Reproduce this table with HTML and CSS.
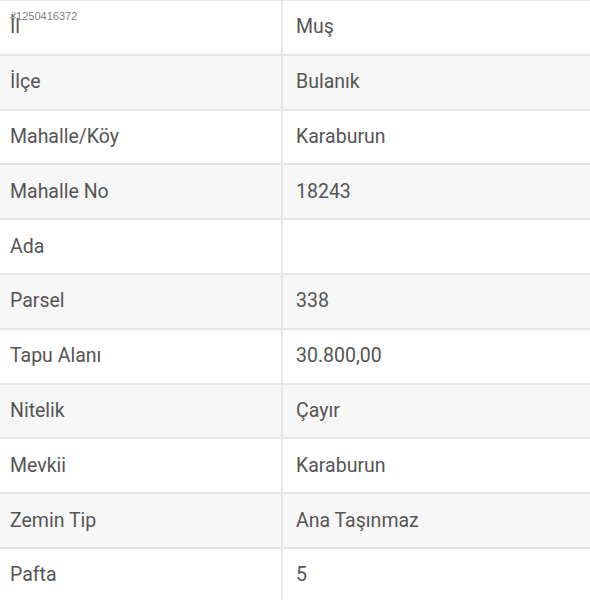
FILE: index.html
```html
<!DOCTYPE html>
<html lang="tr">
<head>
<meta charset="utf-8">
<link rel="stylesheet" href="styles.css">
</head>
<body>
<div class="wrap">
  <span class="listing-id">#1250416372</span>
  <table class="info">
    <tr><td class="k">İl</td><td class="v">Muş</td></tr>
    <tr><td class="k">İlçe</td><td class="v">Bulanık</td></tr>
    <tr><td class="k">Mahalle/Köy</td><td class="v">Karaburun</td></tr>
    <tr><td class="k">Mahalle No</td><td class="v">18243</td></tr>
    <tr><td class="k">Ada</td><td class="v"></td></tr>
    <tr><td class="k">Parsel</td><td class="v">338</td></tr>
    <tr><td class="k">Tapu Alanı</td><td class="v">30.800,00</td></tr>
    <tr><td class="k">Nitelik</td><td class="v">Çayır</td></tr>
    <tr><td class="k">Mevkii</td><td class="v">Karaburun</td></tr>
    <tr><td class="k">Zemin Tip</td><td class="v">Ana Taşınmaz</td></tr>
    <tr><td class="k">Pafta</td><td class="v">5</td></tr>
  </table>
</div>
</body>
</html>
```

FILE: styles.css
```css
html, body {
  margin: 0;
  padding: 0;
  background: #fff;
}
.wrap {
  position: relative;
  width: 590px;
  overflow: hidden;
}
.listing-id {
  position: absolute;
  left: 10px;
  top: 10px;
  font-family: "Liberation Sans", Arial, sans-serif;
  font-size: 11px;
  color: #808080;
}
.info {
  width: 592px;
  margin-top: -1px;
  border-collapse: collapse;
  table-layout: fixed;
  font-family: Roboto, "Noto Sans", sans-serif;
  font-size: 19.5px;
  color: #555;
}
.info tr:nth-child(even) td {
  background: #f7f7f7;
}
.info td {
  height: 52.8px;
  padding: 0;
  border-top: 2px solid #e6e6e6;
  vertical-align: middle;
  line-height: 24px;
}
.info td.k {
  width: 271px;
  padding-left: 10px;
  border-right: 2px solid #e6e6e6;
}
.info td.v {
  padding-left: 13px;
}
```
